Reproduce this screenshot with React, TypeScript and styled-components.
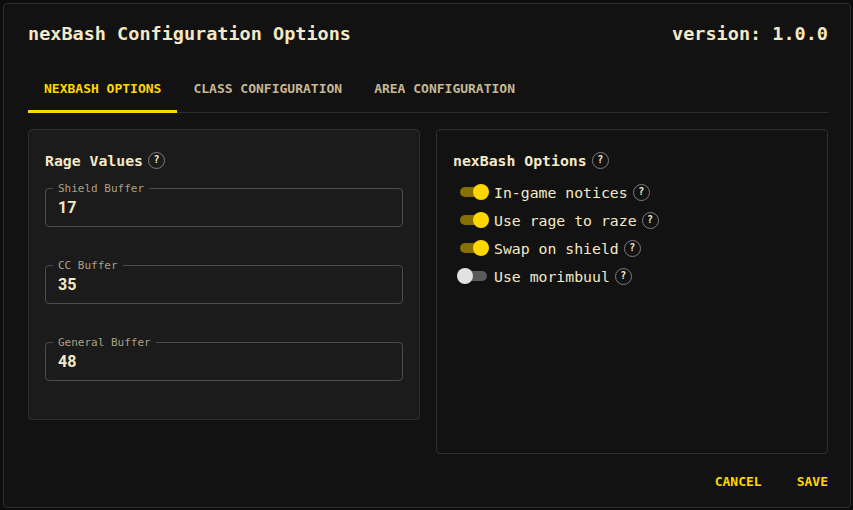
import React, { useState } from 'react';
import styled, { createGlobalStyle } from 'styled-components';

const mono = '"DejaVu Sans Mono", "Liberation Mono", monospace';

const colors = {
  page: '#0d0d0d',
  dialog: '#121212',
  panel: '#1b1b1b',
  border: '#2e2e2e',
  cream: '#f4e8c6',
  tan: '#c6b795',
  label: '#ad9f83',
  yellow: '#ffd600',
};

const GlobalStyle = createGlobalStyle`
  body {
    margin: 0;
    background: ${colors.page};
    font-family: ${mono};
  }
`;

const Dialog = styled.div`
  margin: 3px;
  width: 848px;
  height: 505px;
  box-sizing: border-box;
  background: ${colors.dialog};
  border: 1px solid ${colors.border};
  border-radius: 4px;
  padding: 0 22px 0 24px;
  display: flex;
  flex-direction: column;
  color: ${colors.cream};
`;

const TitleRow = styled.div`
  display: flex;
  justify-content: space-between;
  align-items: center;
  height: 30px;
  padding-top: 14px;
  padding-bottom: 16px;
`;

const Title = styled.h1`
  margin: 0;
  font-family: ${mono};
  font-size: 18.5px;
  font-weight: 700;
  color: ${colors.cream};
`;

const TabBar = styled.div`
  display: flex;
  height: 48px;
  border-bottom: 1px solid ${colors.border};
`;

const Tab = styled.button<{ $active?: boolean }>`
  position: relative;
  background: none;
  border: none;
  padding: 0 16px;
  font-family: ${mono};
  font-size: 13px;
  font-weight: 700;
  color: ${(p) => (p.$active ? colors.yellow : colors.tan)};
  cursor: pointer;

  &::after {
    content: '';
    position: absolute;
    left: 0;
    right: 0;
    bottom: -1px;
    height: 3px;
    background: ${(p) => (p.$active ? colors.yellow : 'transparent')};
  }
`;

const Columns = styled.div`
  display: grid;
  grid-template-columns: 392px 392px;
  gap: 16px;
  margin-top: 16px;
  align-items: start;
`;

const Panel = styled.section<{ $dark?: boolean; $height?: number }>`
  box-sizing: border-box;
  background: ${(p) => (p.$dark ? colors.dialog : colors.panel)};
  border: 1px solid ${colors.border};
  border-radius: 4px;
  padding: 17px 16px 5px 16px;
  height: ${(p) => (p.$height ? `${p.$height}px` : 'auto')};
`;

const PanelTitle = styled.h2`
  margin: 0;
  display: flex;
  align-items: center;
  gap: 5px;
  height: 26px;
  font-family: ${mono};
  font-size: 14.8px;
  font-weight: 700;
  color: ${colors.cream};
`;

const Help = styled.span`
  display: inline-flex;
  align-items: center;
  justify-content: center;
  width: 15px;
  height: 15px;
  border: 1.5px solid #7d7d7d;
  border-radius: 50%;
  font-family: ${mono};
  font-size: 10px;
  font-weight: 700;
  color: ${colors.cream};
  line-height: 1;
`;

const Fields = styled.div`
  margin-top: 10px;
`;

const Fieldset = styled.fieldset`
  margin: 0 0 33px 0;
  height: 44px;
  box-sizing: border-box;
  border: 1px solid #4c4c4c;
  border-radius: 4px;
  padding: 0 12px;
`;

const Legend = styled.legend`
  padding: 0 5px;
  margin-left: -5px;
  font-family: ${mono};
  font-size: 11px;
  color: ${colors.label};
  line-height: 11px;
`;

const Value = styled.input`
  display: block;
  width: 100%;
  height: 19px;
  margin-top: 4px;
  background: transparent;
  border: none;
  outline: none;
  padding: 0;
  font-family: Roboto, "Noto Sans", sans-serif;
  font-size: 16px;
  line-height: 19px;
  font-weight: 700;
  color: ${colors.cream};
`;

const OptionList = styled.div`
  margin-top: 5px;
  padding-left: 4px;
`;

const OptionRow = styled.label`
  display: flex;
  align-items: center;
  height: 28px;
  gap: 4px;
  font-family: ${mono};
  font-size: 14.8px;
  color: ${colors.cream};
  cursor: pointer;
`;

const Switch = styled.span`
  position: relative;
  flex: none;
  width: 33px;
  height: 16px;
`;

const Track = styled.span<{ $on: boolean }>`
  position: absolute;
  left: 3px;
  top: 3px;
  width: 27px;
  height: 10px;
  border-radius: 5px;
  background: ${(p) => (p.$on ? '#857000' : '#5a5a5a')};
`;

const Thumb = styled.span<{ $on: boolean }>`
  position: absolute;
  top: 0;
  left: ${(p) => (p.$on ? '16px' : '0')};
  width: 16px;
  height: 16px;
  border-radius: 50%;
  background: ${(p) => (p.$on ? colors.yellow : '#e2e2e2')};
`;

const OptionText = styled.span`
  margin-right: 1px;
`;

const Actions = styled.div`
  margin-top: auto;
  display: flex;
  justify-content: flex-end;
  gap: 35px;
  height: 51px;
  align-items: center;
`;

const ActionButton = styled.button`
  background: none;
  border: none;
  padding: 6px 0;
  font-family: ${mono};
  font-size: 13px;
  font-weight: 700;
  color: ${colors.yellow};
  cursor: pointer;
`;

const rageFields = [
  { name: 'Shield Buffer', value: '17' },
  { name: 'CC Buffer', value: '35' },
  { name: 'General Buffer', value: '48' },
];

export default function App() {
  const [tab, setTab] = useState(0);
  const [options, setOptions] = useState([
    { label: 'In-game notices', on: true },
    { label: 'Use rage to raze', on: true },
    { label: 'Swap on shield', on: true },
    { label: 'Use morimbuul', on: false },
  ]);

  function toggle(i: number) {
    setOptions(options.map((o, j) => (j === i ? { ...o, on: !o.on } : o)));
  }

  return (
    <>
      <GlobalStyle />
      <Dialog>
        <TitleRow>
          <Title>nexBash Configuration Options</Title>
          <Title>version: 1.0.0</Title>
        </TitleRow>
        <TabBar>
          {['NEXBASH OPTIONS', 'CLASS CONFIGURATION', 'AREA CONFIGURATION'].map((t, i) => (
            <Tab key={t} $active={tab === i} onClick={() => setTab(i)}>
              {t}
            </Tab>
          ))}
        </TabBar>
        <Columns>
          <Panel>
            <PanelTitle>
              Rage Values <Help>?</Help>
            </PanelTitle>
            <Fields>
              {rageFields.map((f) => (
                <Fieldset key={f.name}>
                  <Legend>{f.name}</Legend>
                  <Value defaultValue={f.value} />
                </Fieldset>
              ))}
            </Fields>
          </Panel>
          <Panel $dark $height={325}>
            <PanelTitle>
              nexBash Options <Help>?</Help>
            </PanelTitle>
            <OptionList>
              {options.map((o, i) => (
                <OptionRow key={o.label} onClick={() => toggle(i)}>
                  <Switch>
                    <Track $on={o.on} />
                    <Thumb $on={o.on} />
                  </Switch>
                  <OptionText>{o.label}</OptionText>
                  <Help>?</Help>
                </OptionRow>
              ))}
            </OptionList>
          </Panel>
        </Columns>
        <Actions>
          <ActionButton>CANCEL</ActionButton>
          <ActionButton>SAVE</ActionButton>
        </Actions>
      </Dialog>
    </>
  );
}
